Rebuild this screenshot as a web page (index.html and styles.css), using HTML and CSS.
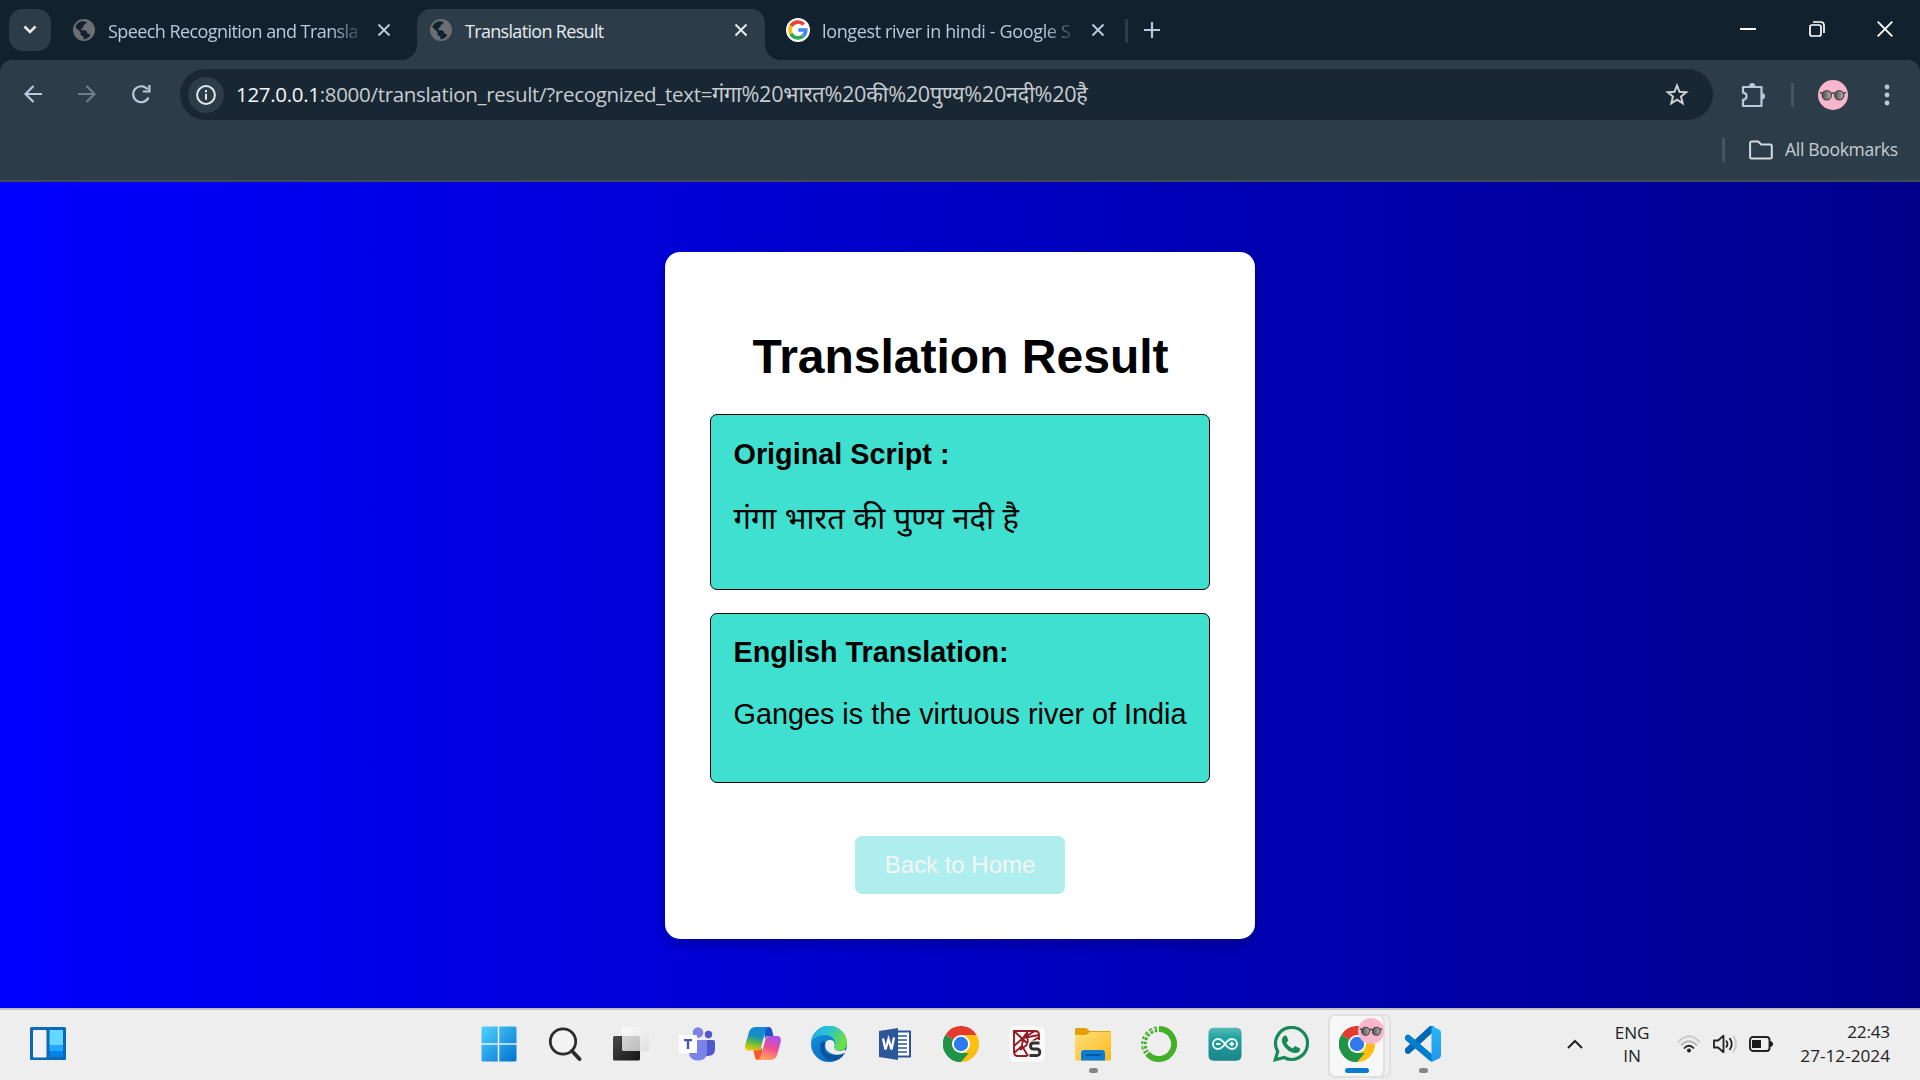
FILE: index.html
```html
<!DOCTYPE html>
<html lang="en">
<head>
<meta charset="utf-8">
<title>Translation Result</title>
<link rel="stylesheet" href="styles.css">
</head>
<body>
<svg class="defs" width="0" height="0" aria-hidden="true">
  <defs>
    <linearGradient id="win" x1="0" y1="0" x2="1" y2="1"><stop offset="0" stop-color="#4fd2ff"/><stop offset="1" stop-color="#0072cf"/></linearGradient>
    <linearGradient id="dark" x1="0" y1="0" x2="1" y2="1"><stop offset="0" stop-color="#4a4a4a"/><stop offset="1" stop-color="#151515"/></linearGradient>
    <linearGradient id="glass" x1="0" y1="0" x2="1" y2="1"><stop offset="0" stop-color="#fff"/><stop offset="1" stop-color="#ddd"/></linearGradient>
    <linearGradient id="copA" x1="0.3" y1="0" x2="0.1" y2="1"><stop offset="0" stop-color="#1089dd"/><stop offset=".35" stop-color="#168fc0"/><stop offset=".65" stop-color="#6bbc3c"/><stop offset="1" stop-color="#ffc800"/></linearGradient>
    <linearGradient id="copB" x1="0.7" y1="0" x2="0.4" y2="1"><stop offset="0" stop-color="#a750f2"/><stop offset=".5" stop-color="#f04f92"/><stop offset="1" stop-color="#ffa65c"/></linearGradient>
    <linearGradient id="edgeA" x1="0" y1="0" x2="1" y2=".4"><stop offset="0" stop-color="#20a5e8"/><stop offset=".5" stop-color="#2cc4cf"/><stop offset="1" stop-color="#6be043"/></linearGradient>
    <linearGradient id="edgeB" x1="0" y1="0" x2=".6" y2="1"><stop offset="0" stop-color="#1798e0"/><stop offset="1" stop-color="#0868bd"/></linearGradient>
    <linearGradient id="fold" x1="0" y1="0" x2="1" y2="1"><stop offset="0" stop-color="#ffe07a"/><stop offset="1" stop-color="#fcb81f"/></linearGradient>
    <linearGradient id="ard" x1="0" y1="0" x2="0" y2="1"><stop offset="0" stop-color="#5bbab6"/><stop offset=".3" stop-color="#1ea3a3"/><stop offset="1" stop-color="#1b8588"/></linearGradient>
    <linearGradient id="vs" x1="0" y1="0" x2="0" y2="1"><stop offset="0" stop-color="#2ab5f8"/><stop offset="1" stop-color="#1f97ee"/></linearGradient>
    <linearGradient id="lens" x1="0" y1="0" x2="1" y2="0"><stop offset="0" stop-color="#454c4e"/><stop offset="1" stop-color="#b9b0b4"/></linearGradient>
    <symbol id="globe" viewBox="0 0 22 22"><circle cx="11" cy="11" r="11" fill="#6b6f73"/><path class="land" d="M9 2.2c1.800 0 3.300.2 4.700.9-.7 1.700-1.700 2.700-3.300 3.100.5 1.700-.2 2.500-2 2.800v2.200h3.300c2 .4 2.600 1.600 2.500 3.300 1.500-.1 2.500.7 3 2a9 9 0 0 1-6.800 3.700v-3c-1.800 0-2.900-.8-2.900-2.500v-1.600L2.300 8.300C3.300 5 5.700 2.700 9 2.200z"/></symbol>
    <symbol id="x" viewBox="0 0 14 14"><path d="M1.500 1.500l11 11M12.500 1.500l-11 11" fill="none" stroke="currentColor" stroke-width="2"/></symbol>
    <symbol id="chrome" viewBox="0 0 36 36"><path d="M18 18L2.400 9A18 18 0 0 1 33.600 9z" fill="#e33b2e"/><path d="M18 18L33.600 9A18 18 0 0 1 18 36z" fill="#fdc012"/><path d="M18 18L18 36A18 18 0 0 1 2.400 9z" fill="#219346"/><path d="M18 9h15.600L25.800 22.500 18 36l7.800-13.500z" fill="#fdc012"/><path d="M2.400 9l7.800 13.500L18 27h7.800L18 36A18 18 0 0 1 2.400 9z" fill="#219346"/><circle cx="18" cy="18" r="9" fill="#fff"/><circle cx="18" cy="18" r="7.200" fill="#2f7bee"/></symbol>
    <symbol id="face" viewBox="0 0 30 30"><circle cx="15" cy="15" r="15" fill="#f8b6cd"/><g fill="url(#lens)" stroke="#4c4546" stroke-width="1.300"><circle cx="8.800" cy="15.300" r="4.600"/><circle cx="21.200" cy="15.300" r="4.600"/></g><path d="M2 12.500l3 1M28 12.500l-3 1M13 13.700q2-1.500 4 0" fill="none" stroke="#4c4546" stroke-width="1.500"/></symbol>
  </defs>
</svg>

<header class="tabs">
  <div class="tab-search"><svg width="14" height="10" viewBox="0 0 14 10"><path d="M1.500 1.500L7 7l5.500-5.500" fill="none" stroke="#e6ecf0" stroke-width="2.500"/></svg></div>
  <div class="tab first">
    <svg class="fav" width="22" height="22"><use href="#globe"/></svg>
    <span class="tab-title fade">Speech Recognition and Transla</span>
    <svg class="close" width="14" height="14"><use href="#x"/></svg>
  </div>
  <div class="tab active">
    <svg class="fav" width="22" height="22"><use href="#globe"/></svg>
    <span class="tab-title result">Translation Result</span>
    <svg class="close" width="14" height="14"><use href="#x"/></svg>
  </div>
  <div class="tab third">
    <svg class="fav" width="24" height="24" viewBox="0 0 24 24"><circle cx="12" cy="12" r="12" fill="#fff"/><g fill="none" stroke-width="3.600"><path d="M5 8.200A7.900 7.900 0 0 1 17.700 6.500" stroke="#ea4335"/><path d="M5 15.600A7.900 7.900 0 0 1 5 8.200" stroke="#fbbc05"/><path d="M17.300 17.900A7.900 7.900 0 0 1 5 15.600" stroke="#34a853"/><path d="M12.300 12h7.500a7.900 7.900 0 0 1-2.500 5.900" stroke="#4285f4"/></g></svg>
    <span class="tab-title fade google">longest river in hindi - Google S</span>
    <svg class="close" width="14" height="14"><use href="#x"/></svg>
  </div>
  <span class="tab-rule"></span>
  <svg class="plus" width="16" height="16" viewBox="0 0 16 16"><path d="M8 0v16M0 8h16" stroke="#b8cadb" stroke-width="2.200"/></svg>
  <div class="window">
    <svg width="16" height="16" viewBox="0 0 16 16"><path d="M0 8h16" stroke="#fff" stroke-width="2"/></svg>
    <svg width="16" height="16" viewBox="0 0 16 16" fill="none" stroke="#fff" stroke-width="1.700"><rect x="1" y="4" width="11" height="11" rx="2"/><path d="M4 1h7.500Q15 1 15 4.500V12"/></svg>
    <svg width="16" height="16" viewBox="0 0 16 16"><path d="M.7.7l14.600 14.600M15.300.7L.7 15.300" stroke="#fff" stroke-width="1.800"/></svg>
  </div>
</header>

<div class="frame">
<section class="toolbar">
  <div class="nav">
    <svg width="18" height="18" viewBox="0 0 18 18"><path d="M18 9H2M9.500 1L1.500 9l8 8" fill="none" stroke="#b8cadb" stroke-width="2.200"/></svg>
    <svg width="18" height="18" viewBox="0 0 18 18"><path d="M0 9h16M8.500 1l8 8-8 8" fill="none" stroke="#6f7e88" stroke-width="2.200"/></svg>
    <svg width="19" height="19" viewBox="0 0 19 19"><path d="M16.500 12.500A8 8 0 1 1 15.500 4.300" fill="none" stroke="#b8cadb" stroke-width="2.200"/><path d="M18.500 0v7.600h-7.600V5.400h5.300V0z" fill="#b8cadb"/></svg>
  </div>
  <div class="omnibox">
    <div class="info"><svg width="20" height="20" viewBox="0 0 20 20"><circle cx="10" cy="10" r="8.900" fill="none" stroke="#e3e8eb" stroke-width="2"/><path d="M10 8.800v6M10 5v2.200" stroke="#e3e8eb" stroke-width="2"/></svg></div>
    <span class="url"><b>127.0.0.1</b>:8000/translation_result/?recognized_text=<span class="hi">गंगा%20भारत%20की%20पुण्य%20नदी%20है</span></span>
    <svg class="star" width="24" height="23" viewBox="0 0 24 23"><path d="M12 2.500l2.500 6.300 6.700.5-5.200 4.300 1.700 6.700L12 16.700l-5.700 3.600L8 13.600 2.800 9.300l6.700-.5z" fill="none" stroke="#cdd2d6" stroke-width="2"/></svg>
  </div>
  <svg class="puzzle" width="26" height="26" viewBox="0 0 26 26"><path d="M3 5h18.500v19H3v-6.200q3.500-.3 3.500-3.600T3 10.600z" fill="none" stroke="#b8cadb" stroke-width="2.200" stroke-linejoin="round"/><path d="M9 5q0-4 3.200-4t3.200 4zM21.500 11q3.500 0 3.500 3.300t-3.500 3.300z" fill="#b8cadb"/></svg>
  <span class="rule"></span>
  <svg class="avatar" width="30" height="30"><use href="#face"/></svg>
  <svg class="kebab" width="6" height="22" viewBox="0 0 6 22" fill="#b8cadb"><circle cx="3" cy="3" r="2.400"/><circle cx="3" cy="11" r="2.400"/><circle cx="3" cy="19" r="2.400"/></svg>
</section>
<section class="bookmarks">
  <span class="rule"></span>
  <svg width="24" height="20" viewBox="0 0 24 20"><path d="M2.500 1.500h6.700l3 3h9q1.600 0 1.600 1.500v11q0 1.500-1.600 1.500H2.700q-1.600 0-1.600-1.500V3q0-1.500 1.400-1.500z" fill="none" stroke="#d3d8dc" stroke-width="2"/></svg>
  <span class="bm">All Bookmarks</span>
</section>
</div>

<main class="page">
  <div class="card">
    <h1>Translation Result</h1>
    <div class="box">
      <h2>Original Script :</h2>
      <p class="hindi" lang="hi">गंगा भारत की पुण्य नदी है</p>
    </div>
    <div class="box second">
      <h2>English Translation:</h2>
      <p>Ganges is the virtuous river of India</p>
    </div>
    <a class="home">Back to Home</a>
  </div>
</main>

<footer class="taskbar">
  <svg class="widgets" width="36" height="33" viewBox="0 0 36 33"><rect width="36" height="33" rx="1.500" fill="#0c69b8"/><rect x="3" y="3" width="13.500" height="27.500" rx="1" fill="#f3f3f5"/><path fill="#65d8ff" d="M19.500 3H33v15H19.500z"/><path fill="#1fa8ff" d="M19.500 18H33v6H19.500z"/><path fill="#0683ea" d="M19.500 24H33v6H19.500z"/></svg>
  <div class="apps">
    <div class="app"><svg width="36" height="36" viewBox="0 0 36 36"><path fill="url(#win)" d="M2 .5h14.700v16.700H.500V2Q.5.500 2 .5zM18.300.5H34q1.500 0 1.500 1.500v15.200H18.300zM.5 18.800h16.200v16.700H2Q.500 35.500.500 34zM18.300 18.800h17.200V34q0 1.500-1.500 1.500H18.300z"/></svg></div>
    <div class="app"><svg width="36" height="36" viewBox="0 0 36 36" fill="none" stroke="#2d2d2d"><circle cx="16" cy="15.500" r="12.700" fill="#f3f3f3" stroke-width="2.800"/><path d="M25 25l7.500 8" stroke-width="4" stroke-linecap="round"/></svg></div>
    <div class="app"><svg width="36" height="36" viewBox="0 0 36 36"><rect y="10" width="27" height="24.500" rx="1.500" fill="url(#dark)"/><rect x="9" y="1" width="27" height="24" rx="1.500" fill="url(#glass)" opacity=".8"/></svg></div>
    <div class="app"><svg width="36" height="36" viewBox="0 0 36 36"><circle cx="19" cy="6.500" r="5.300" fill="#7b83eb"/><circle cx="29.500" cy="8.500" r="3.700" fill="#5059c9"/><path d="M22 14h12q2 0 2 2v7q0 7-7 7h-4z" fill="#5059c9"/><path d="M10 14h18v12q0 8.500-9 8.500T10 26z" fill="#7b83eb"/><rect y="9" width="18" height="18" fill="#fff"/><path d="M5 13h8v2.200h-2.800V23H7.800v-7.800H5z" fill="#4b53bc"/></svg></div>
    <div class="app"><svg width="36" height="36" viewBox="0 0 36 36"><path d="M19 1h5q2.200 0 3 3l1.500 6h-5q-2.500 0-3.500 3z" fill="#1752c9"/><path d="M17 34h-4q-2.500 0-3.200-3L8.500 24h4q3.500 0 4.500-3z" fill="#f45c35"/><path d="M11 1h12.500q-2.500 1-3.500 5l-3.500 14q-1 4.500-5.500 4.500H4Q-1 24.500.5 18L4 6q1.500-5 7-5z" fill="url(#copA)"/><path d="M25 10h7q5 0 3.500 7L32 29q-1.500 5-7 5H12.500q2.700-1 3.700-5L20 15q1.200-5 5-5z" fill="url(#copB)"/></svg></div>
    <div class="app"><svg width="36" height="36" viewBox="0 0 36 36"><circle cx="18" cy="18" r="18" fill="url(#edgeB)"/><path d="M.2 15A18 18 0 0 1 36 17q-.5 7.500-7.500 7.800-6 0-5.500-3 2-2.800 1-6Q22 10 15 9 6 8.300.2 15z" fill="url(#edgeA)"/><path d="M11 15q-5 10 3 16.500 6 5 13 1.600-8 0-12-6.500-3-5.500-.5-10z" fill="#0b559f"/><path d="M12 18.500q-1 8 7 10 8 2 15-1.500-2.500 4.500-7 6.700-8 2-13-3.200-5-6-2-12z" fill="#0b559f"/><path d="M15 15.500q4-3.500 8 0 1.500 3 0 6 1 4 7 3.500l4-1.500q1 1.800-.5 3.500-5 2.500-10 1.500-12-3-8.500-13z" fill="#eee"/></svg></div>
    <div class="app"><svg width="36" height="36" viewBox="0 0 36 36"><rect x="18" y="5.500" width="15" height="25" fill="#fff" stroke="#2b579a" stroke-width="2"/><path d="M20 10h10M20 14h10M20 18h10M20 22h10M20 26h10" stroke="#2b579a" stroke-width="1.700"/><path d="M2 5l19-3v32L2 31z" fill="#2b579a"/><path d="M6 12.500l2.500 11 3-10.500 3 10.500 2.500-12" fill="none" stroke="#fff" stroke-width="2.300"/></svg></div>
    <div class="app"><svg width="36" height="36"><use href="#chrome"/></svg></div>
    <div class="app"><svg width="36" height="36" viewBox="0 0 36 36"><rect width="36" height="36" rx="6" fill="#fafafa"/><path d="M18 30H9q-4 0-4-4V5h21q4 0 4 4v5M5 5l14 13M5 20l9-8 12-7M19 5l-5 7-1 8-8 7M13 20l6 10M14 12l16-3M19 18l11-7M18 6l1 12-8 6" fill="none" stroke="#951a22" stroke-width="1.900"/><path d="M30 17h-6q-3 0-3 3t3 3h3q3.300 0 3.300 3.300T27 29.500h-7" fill="none" stroke="#fafafa" stroke-width="5"/><path d="M30.500 17h-6q-3 0-3 3t3 3h3q3.300 0 3.300 3.300T27.500 29.500h-7" fill="none" stroke="#333" stroke-width="2.900"/></svg></div>
    <div class="app"><svg width="36" height="36" viewBox="0 0 36 36"><path d="M0 3.500Q0 2 1.500 2H11l4 3h20q1 0 1 1.500V12H0z" fill="#e3a008"/><path d="M0 9h11l4-3h20q1 0 1 1v26q0 1.500-1.500 1.500h-33Q0 34.500 0 33z" fill="url(#fold)"/><path d="M6 34.500V27q0-3 3-3h18q3 0 3 3v7.500z" fill="#0b7dd3"/><path d="M10.500 29h15" stroke="#07549b" stroke-width="1.800"/></svg><i class="dot"></i></div>
    <div class="app"><svg width="36" height="36" viewBox="0 0 36 36" fill="none" stroke="#43b02a"><path d="M18 3A15 15 0 1 1 6.500 27.600" stroke-width="6"/><path d="M16 3.200A15 15 0 0 0 5.500 26.500" stroke-width="5.500" stroke-dasharray="2.800 1.900"/><path d="M15 3A15 15 0 0 0 3.500 24" stroke="#eee" stroke-width="1" stroke-dasharray="3 1"/></svg></div>
    <div class="app"><svg width="36" height="36" viewBox="0 0 36 36"><rect x="1.500" y="1.800" width="33" height="33" rx="5" fill="url(#ard)"/><path d="M18 18c-2.500-3.500-4.500-5-7-5a5 5 0 0 0 0 10c2.500 0 4.500-1.500 7-5s4.500-5 7-5a5 5 0 0 1 0 10c-2.500 0-4.500-1.500-7-5zM9 18h4.500M22.500 18H27M24.800 15.800v4.400" fill="none" stroke="#f2fafa" stroke-width="1.900"/></svg></div>
    <div class="app"><svg width="36" height="36" viewBox="0 0 36 36"><path d="M2.300 33.700l2.400-8.300A16 16 0 1 1 11 31.500z" fill="none" stroke="#188a57" stroke-width="3.200"/><path d="M12 9.500q1.200-.2 1.800 1l1.600 3.700-2 2.800q2.200 4 6.200 5.500l2.400-2.600 5.200 2.500q0 4.600-5.200 4.600-5.500-.5-10-5.500-4-4.500-2.800-9 1-3 2.800-3z" fill="#188a57"/></svg></div>
    <div class="app current"><svg width="36" height="36"><use href="#chrome"/></svg><svg class="badge" width="26" height="26"><use href="#face"/></svg><i class="dot wide"></i></div>
    <div class="app"><svg width="36" height="36" viewBox="0 0 36 36"><path d="M3 24.500L26.500 3" stroke="#0068b4" stroke-width="6.500" stroke-linecap="round"/><path d="M3 12L26.500 32" stroke="#0080cc" stroke-width="6.500" stroke-linecap="round"/><path d="M26.500 0L34 3.500q2 1 2 3v23q0 2-2 3L26.500 36z" fill="url(#vs)"/></svg><i class="dot"></i></div>
  </div>
  <div class="tray">
    <svg class="chev" width="16" height="10" viewBox="0 0 16 10"><path d="M1 9l7-7 7 7" fill="none" stroke="#222" stroke-width="2"/></svg>
    <div class="lang">ENG<br>IN</div>
    <svg class="wifi" width="24" height="18" viewBox="0 0 24 18" fill="none" stroke-width="1.800"><path d="M1 7.500Q12-5 23 7.500" stroke="#c9c9c9"/><path d="M4 10.500q8-8.500 16 0" stroke="#b5b5b5"/><path d="M7 13.500q5-5.500 10 0" stroke="#222"/><circle cx="12" cy="15.500" r="2" fill="#222"/></svg>
    <svg class="sound" width="25" height="20" viewBox="0 0 25 20" fill="none" stroke="#222" stroke-width="1.800"><path d="M1 6.500h4L10.500 1.800v16.400L5 13.500H1z" stroke-linejoin="round"/><path d="M13 6.500q3 3.500 0 7M16.500 4q4.500 6 0 12"/><path d="M20 1.500q6 8.500 0 17" stroke="#c9c9c9"/></svg>
    <svg class="battery" width="24" height="16" viewBox="0 0 24 16"><rect x="1" y="1" width="19.500" height="14" rx="3" fill="none" stroke="#222" stroke-width="1.900"/><path d="M3 4h9v8H3zM21 5q3 .5 3 3t-3 3z" fill="#1a1a1a"/></svg>
    <div class="clock"><span class="time">22:43</span><span>27-12-2024</span></div>
  </div>
</footer>
</body>
</html>
```
FILE: styles.css
```css
* { box-sizing: border-box; }
body {
  margin: 0;
  width: 1920px;
  height: 1080px;
  overflow: hidden;
  display: flex;
  flex-direction: column;
  background: #11212d;
  font-family: "Open Sans", "Noto Sans", sans-serif;
}
svg { display: block; flex: none; }
.defs { position: absolute; }

/* tab strip */
.tabs {
  height: 60px;
  flex: none;
  display: flex;
  align-items: flex-start;
  color: #b8cadb;
  padding-left: 9px;
}
.tab-search {
  width: 42px;
  height: 42px;
  margin-top: 9px;
  border-radius: 14px;
  background: #2d3c49;
  display: flex;
  align-items: center;
  justify-content: center;
}
.tab {
  height: 51px;
  margin-top: 9px;
  padding-bottom: 9px;
  display: flex;
  align-items: center;
  font-size: 18px;
  white-space: nowrap;
}
.land { fill: #11212d; }
.first { width: 366px; padding-left: 22px; }
.active {
  position: relative;
  width: 348px;
  padding-left: 13px;
  border-radius: 14px 14px 0 0;
  background: #2d3c49;
  color: #e6ecf0;
}
.active::before, .active::after {
  content: "";
  position: absolute;
  bottom: 0;
  width: 15px;
  height: 15px;
}
.active::before { left: -15px; background: radial-gradient(circle at 0 0, transparent 14.5px, #2d3c49 15px); }
.active::after { right: -15px; background: radial-gradient(circle at 100% 0, transparent 14.5px, #2d3c49 15px); }
.third { width: 360px; padding-left: 21px; }
.tab-title { width: 253px; margin-left: 13px; padding-top: 2px; letter-spacing: -0.57px; }
.google { width: 252px; margin-left: 12px; letter-spacing: -0.36px; }
.result { width: 262px; letter-spacing: -0.68px; }
.fade { -webkit-mask-image: linear-gradient(90deg, #000 88%, transparent 102%); mask-image: linear-gradient(90deg, #000 88%, transparent 102%); }
.close { margin-left: 16px; }
.active .close { margin-left: 7px; }
.third .close { margin-left: 17px; }
.tab-rule { width: 3px; height: 24px; margin: 19px 0 0 0; background: #2d3c49; border-radius: 1px; }
.plus { margin: 22px 0 0 16px; }
.window { margin: 21px 27px 0 auto; display: flex; gap: 52.5px; }

/* toolbar */
.frame {
  height: 122px;
  flex: none;
  background: #2d3c49;
  border-bottom: 2px solid #414b53;
  border-radius: 12px 12px 0 0;
}
.toolbar { height: 69px; padding: 9px 30px 9px 24px; display: flex; align-items: center; }
.nav { width: 156px; display: flex; gap: 36px; }
.omnibox {
  width: 1533px;
  height: 51px;
  border-radius: 26px;
  background: #182733;
  display: flex;
  align-items: center;
  padding-left: 8px;
}
.info { width: 36px; height: 36px; border-radius: 50%; background: #2d3c49; display: flex; align-items: center; justify-content: center; }
.url { margin: -2px 0 0 12px; width: 1420px; font-size: 20.5px; letter-spacing: -0.31px; white-space: nowrap; color: #c7ccd1; }
.url b { font-weight: 400; color: #f4f6f8; }
.hi { font-size: 21.6px; letter-spacing: -0.25px; }
.star { margin-left: 9px; }
.puzzle { margin-left: 27px; }
.rule { width: 3px; height: 24px; background: #455663; border-radius: 1px; }
.toolbar .rule { margin-left: 25px; }
.avatar { margin-left: 24px; }
.kebab { margin-left: 36px; }
.bookmarks { height: 51px; padding: 1px 22px 10px; display: flex; justify-content: flex-end; align-items: center; color: #c7ccd1; }
.bookmarks svg { margin-left: 24px; }
.bm { width: 113px; margin: -2px 0 0 12px; font-size: 17.5px; letter-spacing: -0.3px; white-space: nowrap; }

/* result page */
.page {
  height: 826px;
  flex: none;
  padding-top: 70px;
  background: linear-gradient(to right, #0000ff, #00008b);
  font-family: "Liberation Sans", Arial, "Noto Sans", sans-serif;
  color: #000;
}
.card {
  width: 590px;
  height: 687px;
  margin: 0 auto;
  padding: 76px 45px 45px;
  border-radius: 15px;
  background: #fff;
  box-shadow: 0 6px 12px rgba(0, 0, 0, .2);
  text-align: center;
}
h1 { margin: 0 0 29px; padding-left: 1px; font-size: 48px; line-height: 57px; white-space: nowrap; }
.box {
  height: 176px;
  margin-bottom: 23px;
  padding: 23px 22px 22px 22.5px;
  border: 1.500px solid #000;
  border-radius: 7px;
  background: #40e0d0;
  text-align: left;
}
.second { height: 170px; margin-bottom: 53px; }
h2 { margin: 0 0 29px; font-size: 28.8px; line-height: 33px; }
.second h2 { margin-top: -1px; }
p { margin: 0; font-size: 28.8px; line-height: 33px; white-space: nowrap; }
.hindi { font-size: 30.9px; line-height: 38px; }
.home {
  display: block;
  width: 210px;
  height: 58px;
  margin: 0 auto;
  border-radius: 7px;
  background: #afeeee;
  color: #f5f5f5;
  font-size: 24px;
  line-height: 57px;
}

/* taskbar */
.taskbar {
  height: 72px;
  flex: none;
  padding-bottom: 2px;
  border-top: 2px solid #c0c0c0;
  background: #eee;
  display: flex;
  align-items: center;
  color: #222;
  font-size: 17.2px;
}
.widgets { margin: -1px 0 0 30px; }
.apps { display: flex; margin-left: 400px; }
.app { position: relative; width: 66px; height: 68px; display: flex; align-items: center; justify-content: center; }
.app > svg { position: relative; }
.dot { position: absolute; left: 28.500px; bottom: 5px; width: 9px; height: 5px; border-radius: 3px; background: #858585; }
.wide { left: 21px; width: 24px; background: #0b78d4; }
.current::before, .current::after { content: ""; position: absolute; top: 4px; height: 60px; border: 2px solid #e0e0e0; border-radius: 7px; background: #f7f7f7; }
.current::before { left: 10px; width: 53px; background: #f0f0f0; }
.current::after { left: 4px; width: 53px; }
.current > svg, .current .dot { z-index: 1; }
.current > .badge { position: absolute; left: 34px; top: 8px; }
.tray { display: flex; align-items: center; margin-left: 111px; }
.lang { width: 60px; margin-left: 19px; text-align: center; line-height: 23px; letter-spacing: -0.2px; }
.wifi { margin-left: 15px; }
.sound { margin-left: 12px; }
.battery { margin-left: 11px; }
.clock { width: 117px; display: flex; flex-direction: column; text-align: right; line-height: 24px; white-space: nowrap; }
.time { letter-spacing: -0.2px; }
```
